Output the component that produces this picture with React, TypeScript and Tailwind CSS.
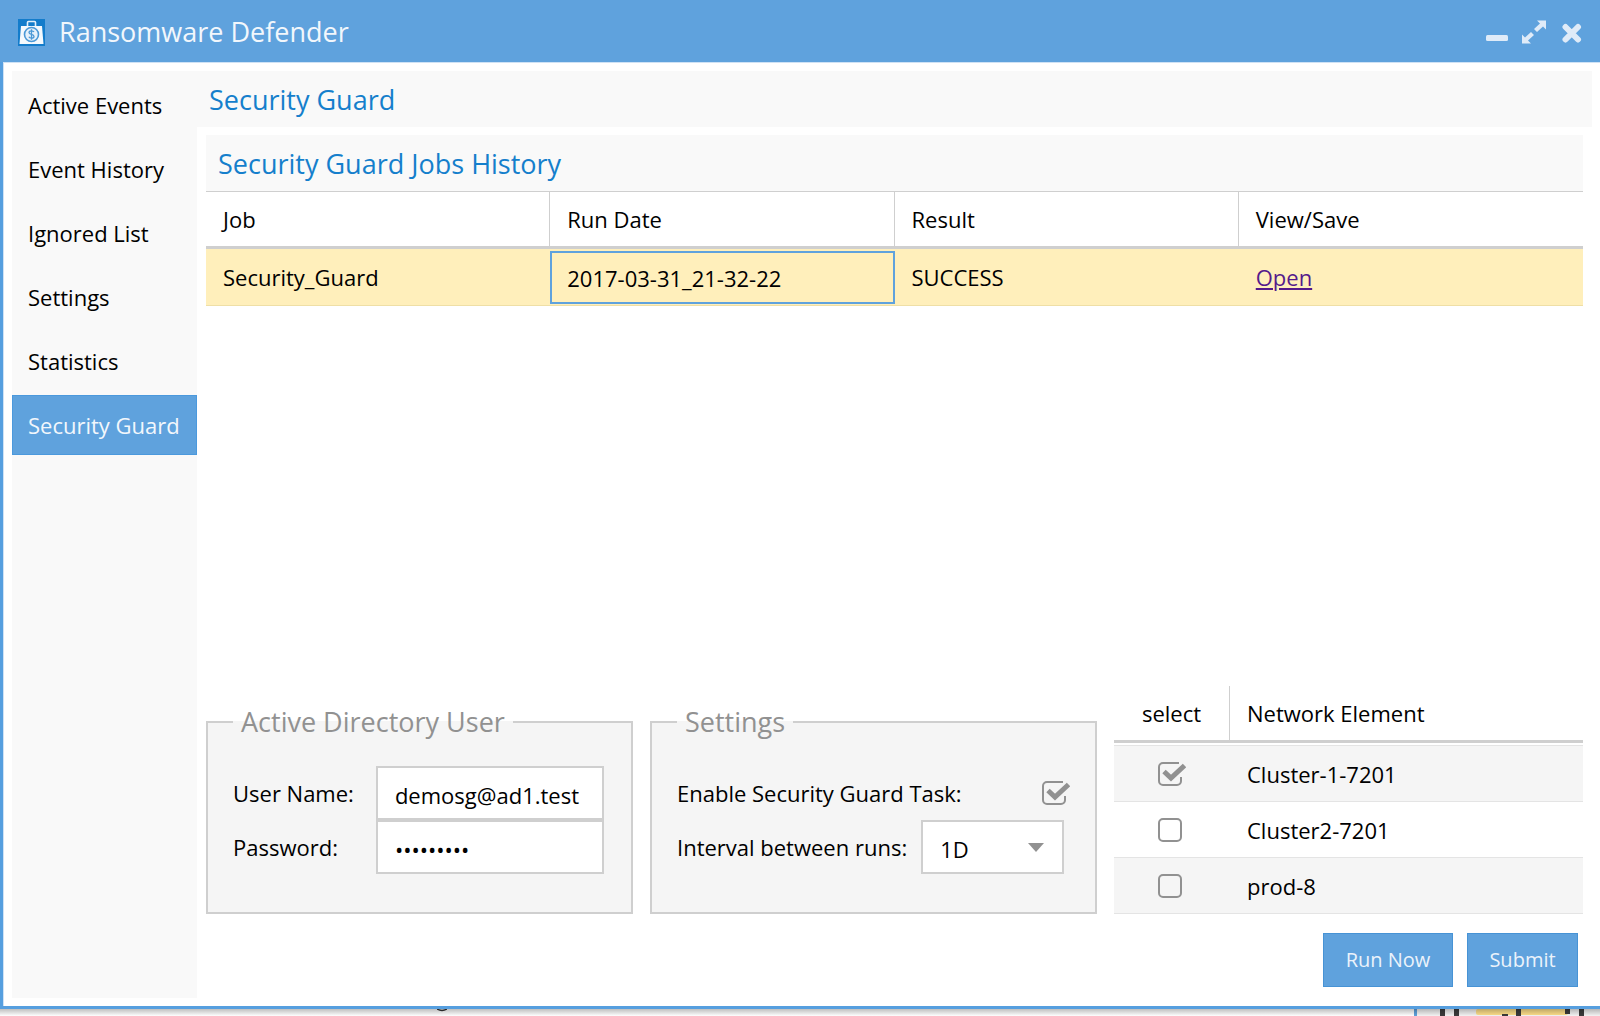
import React, { useState } from 'react';

interface CheckboxProps {
  id?: string;
  label?: string;
  checked: boolean;
  onChange: (checked: boolean) => void;
}

interface NetworkElement {
  name: string;
  selected: boolean;
}

const MENU_ITEMS = [
  'Active Events',
  'Event History',
  'Ignored List',
  'Settings',
  'Statistics',
  'Security Guard'
];

const JOBS = [{ job: 'Security_Guard', runDate: '2017-03-31_21-32-22', result: 'SUCCESS' }];

const Checkbox: React.FC<CheckboxProps> = ({ id, label, checked, onChange }) => (
  <span className="grid h-6 w-7">
    <input
      id={id}
      type="checkbox"
      aria-label={label}
      checked={checked}
      onChange={(e) => onChange(e.target.checked)}
      className="col-start-1 row-start-1 h-6 w-7 appearance-none"
    />
    <svg
      viewBox="0 0 28 24"
      className="pointer-events-none col-start-1 row-start-1 h-6 w-7"
      fill="none"
      stroke="#919191"
      strokeWidth="2"
    >
      {checked ? (
        <>
          <path d="M21 1H5a4 4 0 0 0-4 4v14a4 4 0 0 0 4 4h14a4 4 0 0 0 4-4v-4" />
          <path d="M6 9.500l7 6.500L26.500 3.500" strokeWidth="5" />
        </>
      ) : (
        <rect x="1" y="1" width="22" height="22" rx="4" />
      )}
    </svg>
  </span>
);

const LogoIcon = () => (
  <svg viewBox="0 0 27 27" className="h-[27px] w-[27px]" fill="none">
    <rect width="27" height="27" fill="#137ccb" />
    <rect x="9.5" y="2.5" width="8" height="6" rx="1" stroke="#e4f0fa" strokeWidth="1.6" />
    <path d="M3 7h21l1.500 18h-24z" fill="#f4f9fd" />
    <circle cx="13.5" cy="15.5" r="7" fill="#e4f0fa" stroke="#4a98d6" strokeWidth="1.6" />
    <path
      d="M16 13c-.6-1-1.500-1.200-2.500-1.200-1.500 0-2.500.7-2.500 1.800 0 2.500 5 1.200 5 3.800 0 1.100-1 1.800-2.500 1.800-1.200 0-2.200-.4-2.600-1.400M13.500 10.300v10.400"
      stroke="#4a98d6"
      strokeWidth="1.300"
    />
  </svg>
);

// Part of the desktop that shows under the window's lower edge
const Desktop = () => (
  <div className="relative flex h-[7px] shrink-0 items-end overflow-hidden bg-white">
    <svg viewBox="0 0 186 7" className="ml-auto h-[7px] w-[186px]">
      <rect x="0" y="0" width="186" height="7" fill="#f3f3f3" />
      <rect x="0" y="0" width="3" height="7" fill="#5fa2dd" />
      <rect x="62" y="0" width="92" height="6" rx="2" fill="#ffe08a" />
      <g fill="#3b3b3b">
        <rect x="26" y="0" width="5" height="7" />
        <rect x="40" y="0" width="5" height="7" />
        <rect x="102" y="0" width="5" height="7" />
        <rect x="151" y="0" width="5" height="5" />
        <rect x="165" y="0" width="5" height="7" />
        <rect x="88" y="5" width="6" height="2" />
      </g>
    </svg>
    <svg viewBox="0 0 10 7" className="absolute left-[437px] top-0 h-[7px] w-[10px]">
      <path d="M0 0q5 3 10 0" fill="none" stroke="#333" strokeWidth="1.500" />
    </svg>
    <div className="absolute inset-0 bg-gradient-to-b from-black/25 to-transparent" />
  </div>
);

export default function App() {
  const [active, setActive] = useState('Security Guard');
  const [userName, setUserName] = useState('demosg@ad1.test');
  const [password, setPassword] = useState('demopass1');
  const [enabled, setEnabled] = useState(true);
  const [interval, setInterval] = useState('1D');
  const [elements, setElements] = useState<NetworkElement[]>([
    { name: 'Cluster-1-7201', selected: true },
    { name: 'Cluster2-7201', selected: false },
    { name: 'prod-8', selected: false }
  ]);

  const toggleElement = (name: string, selected: boolean) => {
    setElements((prev) => prev.map((el) => (el.name === name ? { ...el, selected } : el)));
  };

  return (
    <div className="flex h-screen min-h-[720px] flex-col font-['Open_Sans',sans-serif] text-[22px] leading-[30px] text-black">
      <div className="flex min-h-0 flex-1 flex-col border-b-[3px] border-l-[3px] border-[#569fdf] bg-white">
        {/* Title bar */}
        <header className="-ml-[3px] flex h-[62px] shrink-0 items-center bg-[#5fa2dd] pt-[2px] pr-[18px] pl-[18px] text-[#f2f7fc]">
          <LogoIcon />
          <h1 className="ml-[14px] text-[27px] leading-9">Ransomware Defender</h1>
          <div className="ml-auto flex items-center gap-[14px] text-[#dfebf8]">
            <button type="button" aria-label="Minimize">
              <svg viewBox="0 0 22 24" className="h-6 w-[22px]" fill="currentColor">
                <rect x="0" y="15" width="22" height="6" rx="1.500" />
              </svg>
            </button>
            <button type="button" aria-label="Maximize">
              <svg viewBox="0 0 24 24" className="h-6 w-6" fill="currentColor">
                <path d="M15 .500h9v9l-3-3-6 5.500-3-3 6-5.500zM0 23.500v-9l3 3 6-5.500 3 3-6 5.500 3 3z" />
              </svg>
            </button>
            <button type="button" aria-label="Close" className="ml-[2px]">
              <svg viewBox="0 0 20 24" className="h-6 w-5" stroke="currentColor" strokeWidth="6">
                <path d="M3.500 7l12.500 12.500M16 7L3.500 19.500" strokeLinecap="round" />
              </svg>
            </button>
          </div>
        </header>

        <div className="flex min-h-0 flex-1 border-t border-l border-[#cfe2f5] p-2">
          <nav className="flex w-[185px] shrink-0 flex-col gap-1 bg-[#f9f9f9] pt-1">
            {MENU_ITEMS.map((item) => (
              <button
                key={item}
                type="button"
                onClick={() => setActive(item)}
                className={`h-[60px] border pl-[15px] text-left whitespace-nowrap ${
                  item === active
                    ? 'border-[#4b99dd] bg-[#5fa2dd] text-[#f2f7fc]'
                    : 'border-transparent'
                }`}
              >
                {item}
              </button>
            ))}
          </nav>

          <main className="flex min-w-0 flex-1 flex-col">
            <h2 className="bg-[#f9f9f9] pt-[11px] pb-[9px] pl-3 text-[27px] leading-9 text-[#157fcc]">
              Security Guard
            </h2>

            <div className="flex flex-1 flex-col px-[9px] pt-2 pb-[11px]">
              {/* Jobs history */}
              <section className="flex-1">
                <h3 className="border-b border-[#cfcfcf] bg-[#f9f9f9] pt-[11px] pb-[9px] pl-3 text-[27px] leading-9 text-[#157fcc]">
                  Security Guard Jobs History
                </h3>
                <table className="w-full table-fixed border-separate border-spacing-0 text-left">
                  <thead>
                    <tr className="h-[57px]">
                      {['Job', 'Run Date', 'Result', 'View/Save'].map((title) => (
                        <th
                          key={title}
                          className="border-r border-b-[3px] border-r-[#cfcfcf] border-b-[#cfcfcf] pl-[17px] font-normal last:border-r-0"
                        >
                          {title}
                        </th>
                      ))}
                    </tr>
                  </thead>
                  <tbody>
                    {JOBS.map((row) => (
                      <tr key={row.runDate} className="h-[57px] bg-[#ffefbb]">
                        <td className="border-b border-[#efdfa6] pl-[17px]">{row.job}</td>
                        <td className="border-b border-[#efdfa6] pt-[2px] pb-px">
                          <div className="flex h-[53px] items-center border-2 border-[#5fa2dd] pl-[15px]">
                            {row.runDate}
                          </div>
                        </td>
                        <td className="border-b border-[#efdfa6] pl-[17px]">{row.result}</td>
                        <td className="border-b border-[#efdfa6] pl-[17px]">
                          <a href="#open" className="text-[#551a8b] underline">
                            Open
                          </a>
                        </td>
                      </tr>
                    ))}
                  </tbody>
                </table>
              </section>

              <div className="grid grid-cols-[427fr_447fr_469fr] items-end gap-[17px]">
                <fieldset className="h-[210px] border-2 border-[#cfcfcf] bg-[#f5f5f5] px-[25px]">
                  <legend className="px-2 text-[27px] leading-9 text-[#919191]">
                    Active Directory User
                  </legend>
                  <div className="grid grid-cols-[auto_1fr] items-center gap-x-[22px] pt-[26px]">
                    <label htmlFor="user-name">User Name:</label>
                    <input
                      id="user-name"
                      value={userName}
                      onChange={(e) => setUserName(e.target.value)}
                      className="h-[54px] w-[228px] border-2 border-[#cfcfcf] bg-white pt-1 pl-[17px] outline-none"
                    />
                    <label htmlFor="password">Password:</label>
                    <input
                      id="password"
                      type="password"
                      value={password}
                      onChange={(e) => setPassword(e.target.value)}
                      className="h-[54px] w-[228px] border-2 border-[#cfcfcf] bg-white pt-1 pl-[17px] outline-none"
                    />
                  </div>
                </fieldset>

                <fieldset className="h-[210px] border-2 border-[#cfcfcf] bg-[#f5f5f5] px-[25px]">
                  <legend className="px-2 text-[27px] leading-9 text-[#919191]">Settings</legend>
                  <div className="pt-[26px]">
                    <div className="flex h-[54px] items-center justify-between">
                      <label htmlFor="enable-task">Enable Security Guard Task:</label>
                      <Checkbox id="enable-task" checked={enabled} onChange={setEnabled} />
                    </div>
                    <div className="flex h-[54px] items-center gap-[14px]">
                      <label htmlFor="interval" className="whitespace-nowrap">
                        Interval between runs:
                      </label>
                      <div className="grid">
                        <select
                          id="interval"
                          value={interval}
                          onChange={(e) => setInterval(e.target.value)}
                          className="col-start-1 row-start-1 h-[54px] w-[143px] appearance-none border-2 border-[#cfcfcf] bg-white pt-1 pl-[17px] outline-none"
                        >
                          <option>1D</option>
                          <option>7D</option>
                          <option>30D</option>
                        </select>
                        <svg
                          viewBox="0 0 16 9"
                          className="pointer-events-none col-start-1 row-start-1 mr-5 h-[9px] w-4 self-center justify-self-end"
                        >
                          <path d="M0 0h16L8 9z" fill="#919191" />
                        </svg>
                      </div>
                    </div>
                  </div>
                </fieldset>

                <table className="w-full table-fixed border-separate border-spacing-0 text-left">
                  <thead>
                    <tr className="h-[57px]">
                      <th className="w-[116px] border-r border-b-[3px] border-r-[#cfcfcf] border-b-[#cfcfcf] text-center font-normal">
                        select
                      </th>
                      <th className="border-b-[3px] border-[#cfcfcf] pl-[17px] font-normal">
                        Network Element
                      </th>
                    </tr>
                    <tr className="h-[3px]">
                      <td colSpan={2} className="border-b border-[#e4e4e4] p-0" />
                    </tr>
                  </thead>
                  <tbody>
                    {elements.map((el) => (
                      <tr key={el.name} className="h-14 odd:bg-[#f5f5f5]">
                        <td className="border-b border-[#e4e4e4] pl-11">
                          <Checkbox
                            label={`select ${el.name}`}
                            checked={el.selected}
                            onChange={(checked) => toggleElement(el.name, checked)}
                          />
                        </td>
                        <td className="border-b border-[#e4e4e4] pl-[17px]">{el.name}</td>
                      </tr>
                    ))}
                  </tbody>
                </table>
              </div>

              <div className="mt-[19px] flex justify-end gap-[14px] pr-[5px] text-xl text-[#ebf3fb]">
                <button
                  type="button"
                  className="h-[54px] w-[130px] border border-[#4793d5] bg-[#5fa2dd]"
                >
                  Run Now
                </button>
                <button
                  type="button"
                  className="h-[54px] w-[111px] border border-[#4793d5] bg-[#5fa2dd]"
                >
                  Submit
                </button>
              </div>
            </div>
          </main>
        </div>
      </div>
      <Desktop />
    </div>
  );
}
